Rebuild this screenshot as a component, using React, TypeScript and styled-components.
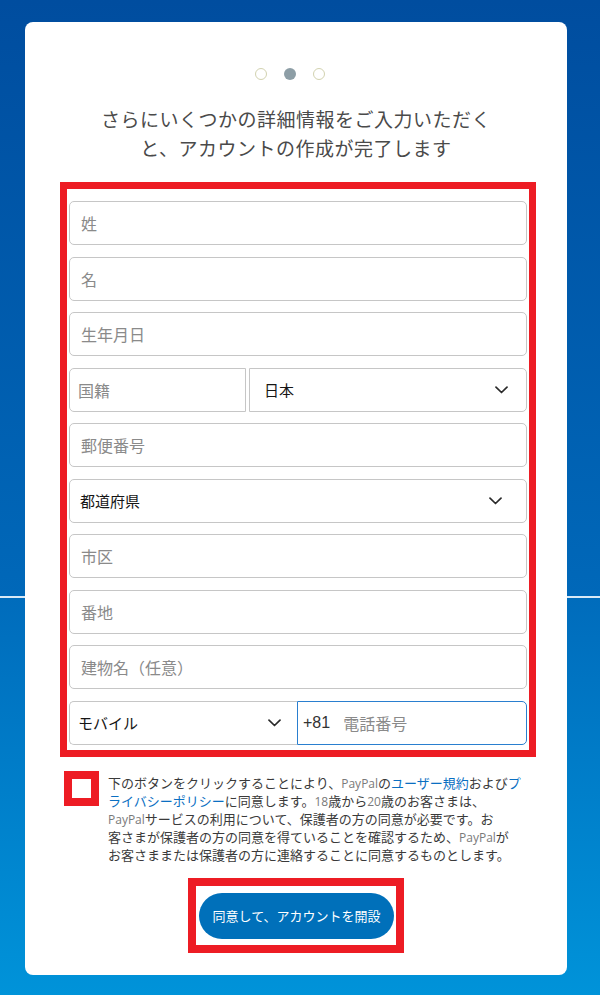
import React from "react";
import styled, { createGlobalStyle } from "styled-components";

const GlobalStyle = createGlobalStyle`
  html, body { margin: 0; padding: 0; }
  body {
    font-family: "Noto Sans CJK JP", "Noto Sans", "Liberation Sans", sans-serif;
    -webkit-font-smoothing: antialiased;
  }
  * { box-sizing: border-box; }
`;

const Page = styled.div`
  width: 600px;
  height: 995px;
  padding: 22px 33px 20px 25px;
  background: linear-gradient(
    to bottom,
    #004d9f 0px,
    #0068b9 596px,
    #d9e9f6 596px,
    #d9e9f6 598px,
    #006cbc 598px,
    #0093d9 995px
  );
`;

const Card = styled.main`
  height: 953px;
  background: #ffffff;
  border-radius: 8px;
  padding: 46px 31px 0 35px;
  display: flex;
  flex-direction: column;
  align-items: stretch;
`;

const Steps = styled.div`
  align-self: center;
  margin-right: 16px;
  display: flex;
  gap: 17.3px;
`;

const Dot = styled.span<{ $active?: boolean }>`
  width: 12px;
  height: 12px;
  border-radius: 50%;
  background: ${(p) => (p.$active ? "#8d9ea6" : "#ffffff")};
  border: ${(p) => (p.$active ? "none" : "1.5px solid #d2d2b0")};
`;

const Title = styled.h1`
  align-self: center;
  margin: 23.5px 4px 0 0;
  font-size: 19px;
  line-height: 29px;
  font-weight: 400;
  color: #4a4a4a;
  text-align: center;
  letter-spacing: 0.5px;
`;

const Highlight = styled.div`
  border: 7px solid #ed1c24;
`;

const FormFrame = styled(Highlight)`
  margin-top: 20.5px;
  padding: 12px 2px 5px 2px;
  display: flex;
  flex-direction: column;
  gap: 11.5px;
`;

const fieldBase = `
  height: 44px;
  border: 1px solid #c6c6c6;
  background: #ffffff;
  font-family: "Noto Sans CJK JP", "Noto Sans", "Liberation Sans", sans-serif;
`;

const TextInput = styled.input`
  ${fieldBase}
  width: 100%;
  border-radius: 5px;
  padding: 0 11px;
  font-size: 16px;
  color: #333;
  outline: none;
  &::placeholder { color: #8a8a8a; }
`;

const SplitRow = styled.div<{ $left: number; $gap: number }>`
  display: grid;
  grid-template-columns: ${(p) => p.$left}px 1fr;
  column-gap: ${(p) => p.$gap}px;
`;

const LabelBox = styled.div`
  ${fieldBase}
  border-radius: 5px 0 0 5px;
  padding-left: 8px;
  display: flex;
  align-items: center;
  font-size: 16px;
  color: #8a8a8a;
`;

type Corner = "all" | "left" | "right";

const radiusFor = (c: Corner) =>
  c === "all" ? "5px" : c === "left" ? "5px 0 0 5px" : "0 5px 5px 0";

const SelectBox = styled.div<{ $corner: Corner; $padLeft: number; $padRight: number; $noRight?: boolean }>`
  ${fieldBase}
  border-radius: ${(p) => radiusFor(p.$corner)};
  ${(p) => (p.$noRight ? "border-right: none;" : "")}
  padding: 0 ${(p) => p.$padRight}px 0 ${(p) => p.$padLeft}px;
  display: flex;
  align-items: center;
  justify-content: space-between;
  font-size: 15px;
  color: #151515;
`;

const PhoneBox = styled.div`
  ${fieldBase}
  border: 1px solid #2a7fcf;
  border-radius: 0 5px 5px 0;
  padding-left: 5px;
  display: flex;
  align-items: center;
  gap: 13px;
`;

const Prefix = styled.span`
  font-family: "Liberation Sans", Arial, sans-serif;
  font-size: 16px;
  color: #333;
`;

const PhoneInput = styled.input`
  flex: 1;
  border: none;
  outline: none;
  background: transparent;
  font-family: "Noto Sans CJK JP", "Noto Sans", sans-serif;
  font-size: 16px;
  color: #333;
  padding: 0;
  min-width: 0;
  &::placeholder { color: #8a8a8a; }
`;

const ConsentRow = styled.div`
  margin: 14px 0 0 4px;
  display: flex;
  align-items: flex-start;
  gap: 9px;
`;

const CheckFrame = styled.span`
  flex: none;
  width: 35px;
  height: 35px;
  border: 8.5px solid #ed1c24;
  background: #fff;
`;

const ConsentText = styled.p`
  margin: 3.5px 0 0 0;
  font-size: 13px;
  line-height: 17px;
  color: #3a3a3a;
  white-space: nowrap;
`;

const Latin = styled.span`
  font-family: "Open Sans", "Liberation Sans", sans-serif;
  color: #7a7a7a;
  font-size: 12px;
`;

const Link = styled.a`
  color: #0a6fc2;
  text-decoration: none;
`;

const ButtonFrame = styled(Highlight)`
  align-self: center;
  margin: 14.5px 4px 0 0;
  border-width: 8px;
  padding: 7px 2px 6px 3px;
`;

const PrimaryButton = styled.button`
  width: 195px;
  height: 46px;
  border: none;
  border-radius: 23px;
  background: #0070ba;
  color: #ffffff;
  font-family: "Noto Sans CJK JP", "Noto Sans", sans-serif;
  font-size: 13px;
  cursor: pointer;
`;

const Chevron = () => (
  <svg width="13" height="8" viewBox="0 0 13 8" fill="none">
    <path d="M1 1.2 L6.5 6.5 L12 1.2" stroke="#2a2a2a" strokeWidth="1.7" strokeLinecap="round" strokeLinejoin="round" />
  </svg>
);

export default function App() {
  return (
    <>
      <GlobalStyle />
      <Page>
        <Card>
          <Steps>
            <Dot />
            <Dot $active />
            <Dot />
          </Steps>
          <Title>
            さらにいくつかの詳細情報をご入力いただく
            <br />
            と、アカウントの作成が完了します
          </Title>

          <FormFrame>
            <TextInput placeholder="姓" />
            <TextInput placeholder="名" />
            <TextInput placeholder="生年月日" />
            <SplitRow $left={177} $gap={3}>
              <LabelBox>国籍</LabelBox>
              <SelectBox $corner="right" $padLeft={14} $padRight={18}>
                <span>日本</span>
                <Chevron />
              </SelectBox>
            </SplitRow>
            <TextInput placeholder="郵便番号" />
            <SelectBox $corner="all" $padLeft={10} $padRight={24}>
              <span>都道府県</span>
              <Chevron />
            </SelectBox>
            <TextInput placeholder="市区" />
            <TextInput placeholder="番地" />
            <TextInput placeholder="建物名（任意）" />
            <SplitRow $left={228} $gap={0}>
              <SelectBox $corner="left" $padLeft={8} $padRight={16} $noRight>
                <span>モバイル</span>
                <Chevron />
              </SelectBox>
              <PhoneBox>
                <Prefix>+81</Prefix>
                <PhoneInput placeholder="電話番号" />
              </PhoneBox>
            </SplitRow>
          </FormFrame>

          <ConsentRow>
            <CheckFrame />
            <ConsentText>
              下のボタンをクリックすることにより、<Latin>PayPal</Latin>の<Link href="#">ユーザー規約</Link>および<Link href="#">プ</Link>
              <br />
              <Link href="#">ライバシーポリシー</Link>に同意します。<Latin>18</Latin>歳から<Latin>20</Latin>歳のお客さまは、
              <br />
              <Latin>PayPal</Latin>サービスの利用について、保護者の方の同意が必要です。お
              <br />
              客さまが保護者の方の同意を得ていることを確認するため、<Latin>PayPal</Latin>が
              <br />
              お客さままたは保護者の方に連絡することに同意するものとします。
            </ConsentText>
          </ConsentRow>

          <ButtonFrame>
            <PrimaryButton>同意して、アカウントを開設</PrimaryButton>
          </ButtonFrame>
        </Card>
      </Page>
    </>
  );
}
